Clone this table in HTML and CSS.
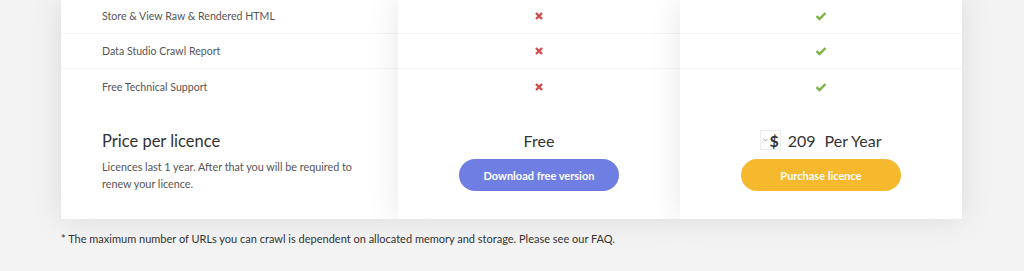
FILE: index.html
```html
<!DOCTYPE html>
<html lang="en">
<head>
  <meta charset="UTF-8" />
  <meta name="viewport" content="width=device-width, initial-scale=1.0"/>
  <title>Licence comparison</title>
  <link rel="stylesheet" href="styles.css">
</head>
<body>
  <div class="pricing">
    <div class="table">
      <div class="column features">
        <div class="row">Store &amp; View Raw &amp; Rendered HTML</div>
        <div class="row">Data Studio Crawl Report</div>
        <div class="row">Free Technical Support</div>
        <div class="price-cell">
          <h2 class="price-title">Price per licence</h2>
          <p class="price-note">Licences last 1 year. After that you will be required to renew your licence.</p>
        </div>
      </div>

      <div class="column plan">
        <div class="row"><svg class="cross" viewBox="0 0 10 10"><path d="M2 2L8 8M8 2L2 8"/></svg></div>
        <div class="row"><svg class="cross" viewBox="0 0 10 10"><path d="M2 2L8 8M8 2L2 8"/></svg></div>
        <div class="row"><svg class="cross" viewBox="0 0 10 10"><path d="M2 2L8 8M8 2L2 8"/></svg></div>
        <div class="price-cell">
          <div class="amount">Free</div>
          <a class="btn btn-free" href="#">Download free version</a>
        </div>
      </div>

      <div class="column plan">
        <div class="row"><svg class="tick" viewBox="0 0 12 10"><path d="M1.5 5.2L4.5 8L10.5 2"/></svg></div>
        <div class="row"><svg class="tick" viewBox="0 0 12 10"><path d="M1.5 5.2L4.5 8L10.5 2"/></svg></div>
        <div class="row"><svg class="tick" viewBox="0 0 12 10"><path d="M1.5 5.2L4.5 8L10.5 2"/></svg></div>
        <div class="price-cell">
          <div class="amount">
            <span class="currency"><svg class="chevron" viewBox="0 0 6 4"><path d="M0.8 0.8L3 3L5.2 0.8"/></svg>$</span>
            <span class="value">209</span>
            <span class="period">Per Year</span>
          </div>
          <a class="btn btn-buy" href="#">Purchase licence</a>
        </div>
      </div>
    </div>

    <p class="footnote">* The maximum number of URLs you can crawl is dependent on allocated memory and storage. Please see our FAQ.</p>
  </div>
</body>
</html>
```

FILE: styles.css
```css
* {
  box-sizing: border-box;
}
body, html {
  margin: 0;
  padding: 0;
  overflow: hidden;
  height: 100%;
  background: #f3f3f3;
  font-family: Lato, "Open Sans", Arial, sans-serif;
  color: #333;
}
.pricing {
  width: 901px;
  margin: -1px 0 0 61px;
}
.table {
  display: grid;
  grid-template-columns: 337px 282px 282px;
}
.column {
  position: relative;
  background: #fff;
  box-shadow: 0 0 30px rgba(0, 0, 0, 0.1);
}
.column.plan {
  z-index: 1;
}
.column.plan:last-child {
  z-index: 2;
}
.row {
  height: 35px;
  border-bottom: 1px solid #f5f5f5;
  display: flex;
  align-items: center;
  font-size: 10.6px;
  color: #555;
}
.row:nth-child(3) {
  border-bottom: none;
}
.features .row {
  padding-left: 41px;
}
.plan .row {
  justify-content: center;
}
.cross {
  width: 10px;
  height: 10px;
  fill: none;
  stroke: #d24a4a;
  stroke-width: 2.4;
}
.tick {
  width: 12px;
  height: 10px;
  fill: none;
  stroke: #7db343;
  stroke-width: 2.4;
}
.price-cell {
  height: 115px;
  padding-top: 26px;
}
.features .price-cell {
  padding-left: 41px;
  padding-right: 20px;
}
.price-title {
  margin: 0;
  font-size: 16.5px;
  line-height: 22px;
  font-weight: 400;
  color: #333;
}
.price-note {
  margin: 6px 0 0;
  font-size: 10.8px;
  line-height: 17px;
  color: #555;
}
.plan .price-cell {
  display: flex;
  flex-direction: column;
  align-items: center;
}
.amount {
  display: flex;
  align-items: center;
  height: 22px;
  margin-top: -1px;
  margin-bottom: 1px;
  font-size: 16px;
  color: #333;
}
.currency {
  display: flex;
  align-items: center;
  height: 20px;
  padding: 0 1px 0 2px;
  border: 1px solid #ececec;
  font-size: 16px;
  font-weight: 700;
}
.chevron {
  width: 5px;
  height: 4px;
  margin-right: 1px;
  fill: none;
  stroke: #777;
  stroke-width: 0.9;
}
.value {
  margin-left: 7px;
}
.period {
  margin-left: 9px;
}
.btn {
  display: flex;
  align-items: center;
  justify-content: center;
  width: 160px;
  height: 32px;
  margin-top: 7px;
  border-radius: 16px;
  color: #fff;
  font-size: 11px;
  font-weight: 700;
  text-decoration: none;
}
.btn-free {
  background: #6f7ee2;
}
.btn-buy {
  background: #f6b82c;
}
.footnote {
  margin: 13px 0 0;
  font-size: 11px;
  color: #333;
}
```
